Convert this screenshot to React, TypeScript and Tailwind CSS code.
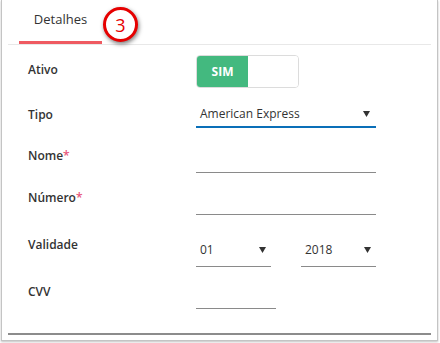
import React from "react";

const Arrow = () => (
  <svg width="7" height="6" viewBox="0 0 7 6" className="shrink-0">
    <path d="M0 0H7L3.5 6Z" fill="#333" />
  </svg>
);

const Label = ({ text, required, pt }: { text: string; required?: boolean; pt: string }) => (
  <div className={`w-[168px] shrink-0 text-[12px] leading-[18px] font-semibold text-[#333] ${pt}`}>
    {text}
    {required && <span className="text-[#e8557a]">*</span>}
  </div>
);

export default function App() {
  return (
    <div className="w-[440px] h-[343px] bg-white" style={{ fontFamily: '"Open Sans", "Liberation Sans", sans-serif' }}>
      <div className="relative ml-[1px] w-[437px] h-[341px] border border-t-0 border-[#c4c4c4] shadow-[0_1px_2px_rgba(0,0,0,0.25)] px-[6px]">
        {/* tabs */}
        <div className="border-b border-[#e8e8e8] flex pl-[11px]">
          <div className="w-[83px] h-[44px] border-b-[3px] border-[#ef5a61] flex items-center justify-center text-[13px] text-[#333] pb-[1px]">
            Detalhes
          </div>
        </div>
        <div className="absolute left-[101px] top-[7px] w-[35px] h-[35px] rounded-full border-[3px] border-[#e60000] bg-white shadow-[1px_2px_4px_rgba(0,0,0,0.5)] flex items-center justify-center text-[18px] leading-none text-[#e60000]">
          3
        </div>

        <div className="pl-[20px]">
          {/* Ativo */}
          <div className="flex items-start mt-[10px] h-[33px]">
            <Label text="Ativo" pt="pt-[6px]" />
            <div className="flex w-[103px] h-[33px] rounded-[4px] border border-[#dcdcdc] overflow-hidden">
              <div className="w-[51px] bg-[#43b97f] flex items-center justify-center text-white text-[12px] font-bold">SIM</div>
              <div className="flex-1 bg-white" />
            </div>
          </div>

          {/* Tipo */}
          <div className="flex items-start h-[40px]">
            <Label text="Tipo" pt="pt-[18px]" />
            <div className="mt-[10px] w-[180px] h-[30px] border-b-2 border-[#0a6fb8] flex items-center justify-between pl-[4px] pr-[6px] pt-[3px] text-[12px] text-[#333]">
              <span>American Express</span>
              <Arrow />
            </div>
          </div>

          {/* Nome */}
          <div className="flex items-start h-[45px]">
            <Label text="Nome" required pt="pt-[19px]" />
            <div className="mt-[14px] w-[180px] h-[31px] border-b border-[#8a8a8a]" />
          </div>

          {/* Número */}
          <div className="flex items-start h-[42px]">
            <Label text="Número" required pt="pt-[16px]" />
            <div className="mt-[11px] w-[180px] h-[31px] border-b border-[#8a8a8a]" />
          </div>

          {/* Validade */}
          <div className="flex items-start h-[52px]">
            <Label text="Validade" pt="pt-[21px]" />
            <div className="mt-[21px] flex gap-[30px]">
              <div className="w-[75px] h-[31px] border-b border-[#8a8a8a] flex items-center justify-between pl-[4px] pr-[5px] pb-[2px] text-[12px] text-[#333]">
                <span>01</span>
                <Arrow />
              </div>
              <div className="w-[75px] h-[31px] border-b border-[#8a8a8a] flex items-center justify-between pl-[4px] pr-[5px] pb-[2px] text-[12px] text-[#333]">
                <span>2018</span>
                <Arrow />
              </div>
            </div>
          </div>

          {/* CVV */}
          <div className="flex items-start h-[42px]">
            <Label text="CVV" pt="pt-[16px]" />
            <div className="mt-[10px] w-[80px] h-[32px] border-b border-[#8a8a8a]" />
          </div>
        </div>

        <div className="mt-[24px] h-[2px] bg-[#8c8c8c]" />
      </div>
    </div>
  );
}
